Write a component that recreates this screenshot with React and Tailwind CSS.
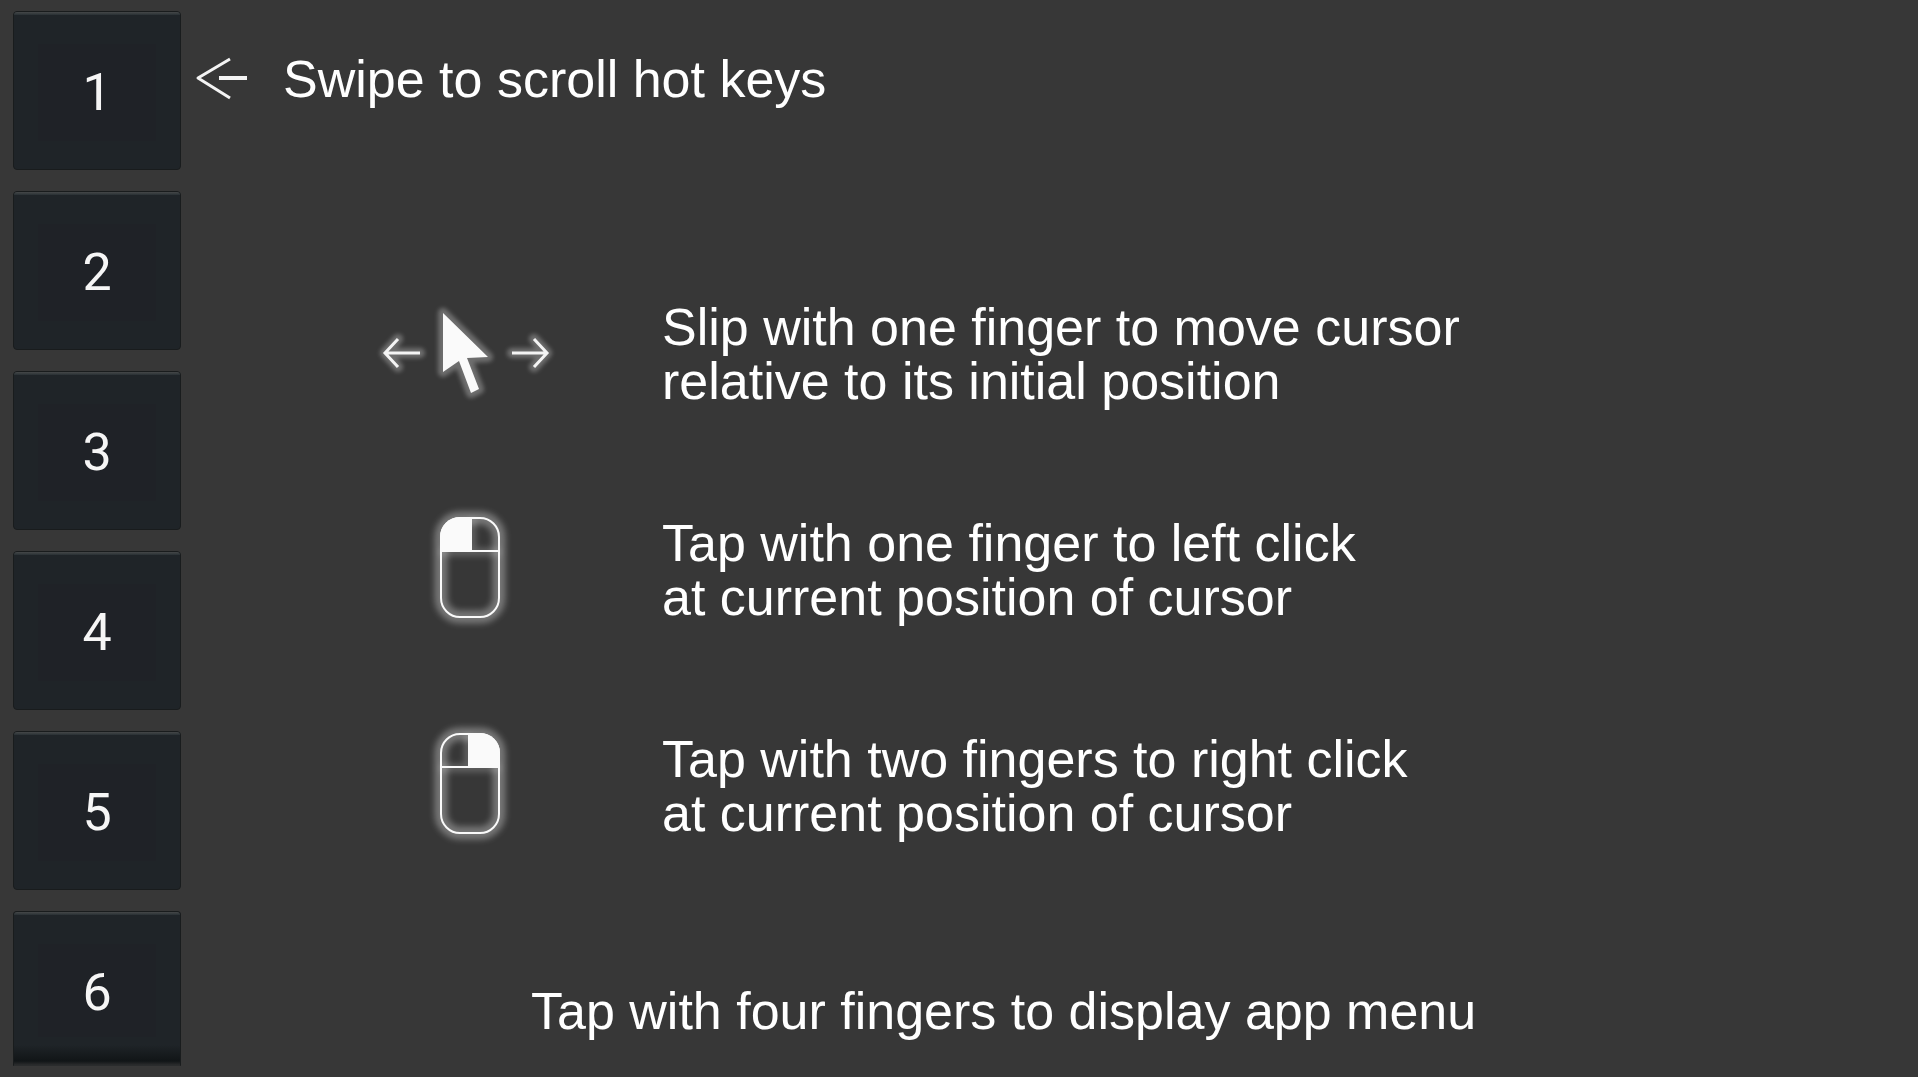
const keys = ['1', '2', '3', '4', '5', '6'];

function HotKey({ label, last }) {
  return (
    <button
      type="button"
      className={
        'relative flex w-full items-center justify-center border border-[#191c1d] bg-[#1f2428] font-["Roboto",sans-serif] text-[52px] leading-none text-[#f6f6f6] ' +
        (last ? 'h-[155px] rounded-t-sm border-b-[#2a2c2d] pt-2' : 'h-[159px] rounded-sm pt-1')
      }
    >
      <span className="absolute inset-x-0 top-0 h-[3px] rounded-t-sm bg-linear-to-b from-[#454849] to-[#293034]" />
      <span className="absolute inset-x-6 top-8 bottom-7 bg-[#1f2227]" />
      {last && (
        <span className="absolute inset-x-0 bottom-0 h-5 bg-linear-to-b from-[#1f2428] via-[#111517] via-80% to-[#2b2c2d]" />
      )}
      <span className="relative">{label}</span>
    </button>
  );
}

function SwipeArrow() {
  return (
    <svg className="h-12 w-[52px]" viewBox="0 0 52 48" fill="none" stroke="#f4f4f4" aria-hidden="true">
      <path d="M35 4 3 23 35 43" strokeLinejoin="round" strokeWidth="3" />
      <path d="M24 23H52" strokeWidth="4" />
    </svg>
  );
}

function CursorIcon() {
  const arrows = 'M38 49 25 63 38 77M26 63H60M174 49 187 63 174 77M152 63H186';
  const pointer = 'M83 23 128 67 107 68 119 99 111 103 99 71 83 82Z';
  return (
    <svg className="h-[108px] w-[220px] overflow-visible" viewBox="0 10 220 108" fill="none" aria-hidden="true">
      <g className="blur-[2px]" stroke="#ffffff" strokeOpacity="0.28" strokeWidth="10" strokeLinejoin="round" strokeLinecap="round">
        <path d={arrows} />
        <path d={pointer} />
      </g>
      <path d={arrows} stroke="#f4f4f4" strokeWidth="3" />
      <path d={pointer} fill="#fafafa" />
    </svg>
  );
}

function MouseIcon({ side }) {
  return (
    <svg className="h-[102px] w-[62px] overflow-visible" viewBox="0 0 62 102" fill="none" aria-hidden="true">
      <g className="blur-[3px]" stroke="#ffffff" strokeOpacity="0.32" strokeWidth="13">
        <path d={side === 'left' ? 'M1 36H61M33 2V34' : 'M1 36H61M29 2V34'} strokeWidth="8" strokeOpacity="0.22" />
        <rect x="2" y="2" width="58" height="99" rx="19" />
      </g>
      <g stroke="#fafafa" strokeWidth="2">
        <rect x="2" y="2" width="58" height="99" rx="19" />
        <path d="M2 35H60" />
      </g>
      {side === 'left' ? (
        <path d="M33 1H21A20 20 0 0 0 1 21V36H33Z" fill="#fafafa" />
      ) : (
        <path d="M29 1H41A20 20 0 0 1 61 21V36H29Z" fill="#fafafa" />
      )}
    </svg>
  );
}

function Gesture({ icon, lines }) {
  return (
    <li className="flex items-start gap-[82px]">
      <div className="flex w-[220px] justify-center">{icon}</div>
      <p>
        {lines[0]}
        <br />
        {lines[1]}
      </p>
    </li>
  );
}

export default function App() {
  return (
    <div className='min-h-screen bg-white pr-[2px] pb-[3px] font-["Liberation_Sans",Arial,sans-serif] text-[52px] leading-[54px] text-white'>
      <div className="flex min-h-[calc(100vh-3px)] bg-[#373737] px-[13px] pt-[11px]">
        <nav aria-label="Hot keys" className="flex w-[168px] shrink-0 flex-col gap-[21px]">
          {keys.map((k) => (
            <HotKey key={k} label={k} last={k === '6'} />
          ))}
        </nav>
        <main className="flex flex-1 flex-col pt-[41px]">
          <header className="flex items-center gap-9 pl-[14px]">
            <SwipeArrow />
            <h1>Swipe to scroll hot keys</h1>
          </header>
          <ul className="mt-[194px] flex flex-col gap-[108px] pl-[179px]">
            <Gesture icon={<CursorIcon />} lines={['Slip with one finger to move cursor', 'relative to its initial position']} />
            <Gesture icon={<MouseIcon side="left" />} lines={['Tap with one finger to left click', 'at current position of cursor']} />
            <Gesture icon={<MouseIcon side="right" />} lines={['Tap with two fingers to right click', 'at current position of cursor']} />
          </ul>
          <p className="mt-36 pl-[350px]">Tap with four fingers to display app menu</p>
        </main>
      </div>
    </div>
  );
}
